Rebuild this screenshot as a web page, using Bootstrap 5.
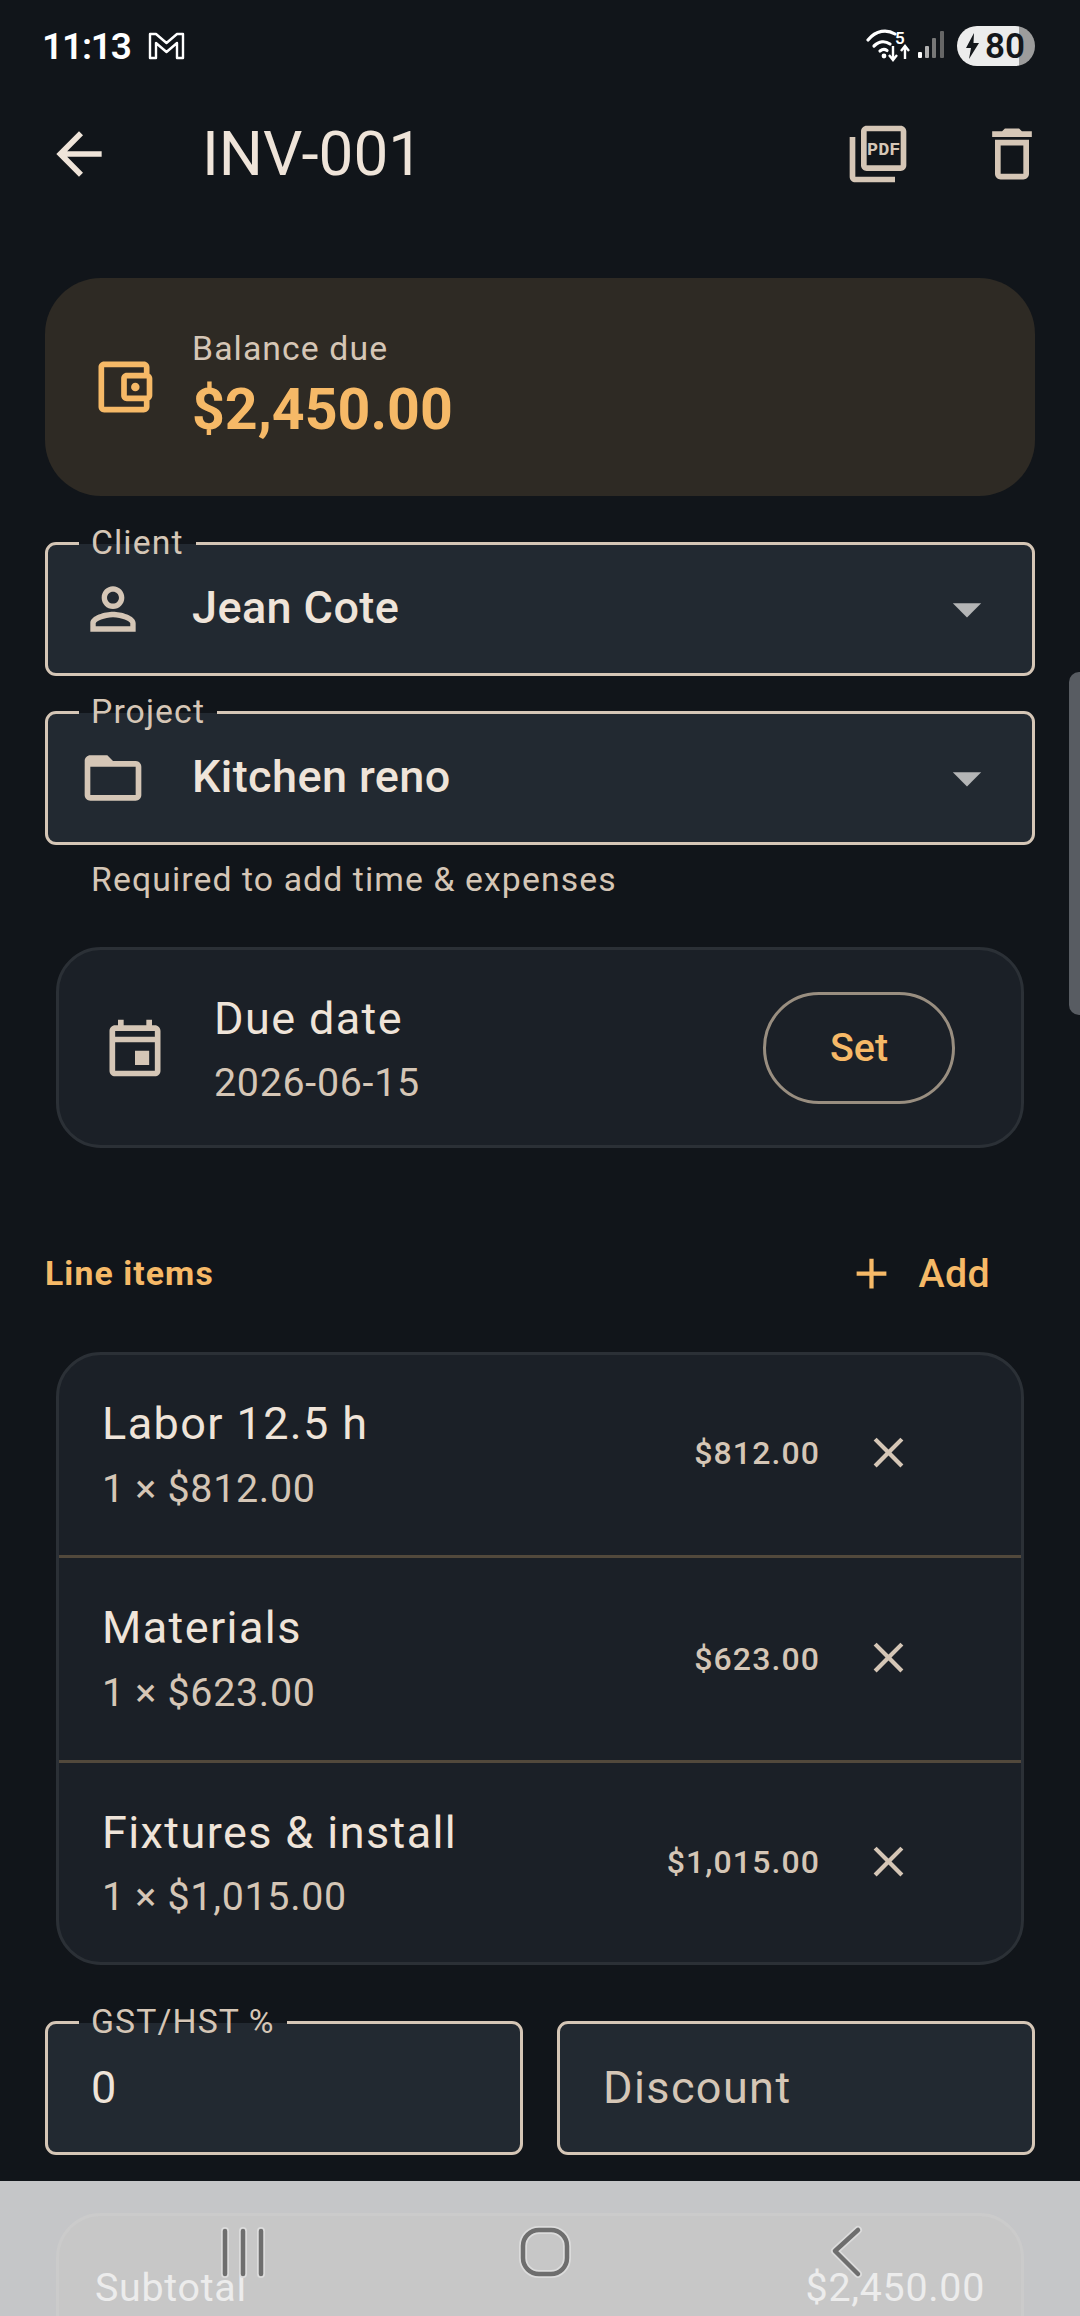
<!DOCTYPE html>
<html lang="en">
<head>
    <meta charset="UTF-8">
    <meta name="viewport" content="width=device-width, initial-scale=1.0">
    <title>INV-001</title>
    <link href="https://cdn.jsdelivr.net/npm/bootstrap@5.3.3/dist/css/bootstrap.min.css" rel="stylesheet">
    <script src="https://cdn.jsdelivr.net/npm/bootstrap@5.3.3/dist/js/bootstrap.bundle.min.js"></script>
    <style>
        body { margin: 0; background: #11151a; font-family: Roboto, "Liberation Sans", sans-serif; color: #efe4d9; }
        .screen { height: 2316px; overflow: hidden; position: relative; background: #11151a; }
        svg { display: block; flex: none; }
        .ico-tan { fill: #d5c6b6; }
        .ico-gold { fill: #f6b967; }

        .statusline { height: 92px; padding: 0 45px 0 42px; }
        .clock { font-size: 37px; font-weight: 600; color: #fff; line-height: 1; margin-right: 17px; letter-spacing: -1.2px; }
        .batt { width: 78px; height: 40px; border-radius: 20px; background: linear-gradient(90deg, #ececec 80%, #9c9c9c 80%); color: #14171b; font-size: 35px; font-weight: 600; padding-left: 9px; gap: 6px; margin-left: 9px; line-height: 1; }

        .appbar { height: 124px; padding: 0 14px 0 45px; }
        .appbar-title { font-size: 62px; font-weight: 400; line-height: 1; margin: 0 0 0 89px; color: #efe4d9; }
        .appbar-acts { gap: 66px; margin-right: 20px; }

        .balance-box { margin: 62px 45px 0; height: 218px; border-radius: 56px; background: #2e2a24; padding-left: 45px; gap: 34px; }
        .balance-label { font-size: 33.75px; letter-spacing: 1.1px; color: #d5c6b6; line-height: 1.2; }
        .balance-amt { font-size: 57.3px; font-weight: 700; color: #f6b967; line-height: 1.2; margin-top: 7px; }

        .outl { position: relative; height: 134px; border: 3px solid #d5c6b6; border-radius: 11px; background: #222931; }
        .outl-full { margin: 46px 45px 0; padding: 0 31px 0 31px; }
        .outl-second { margin-top: 35px; }
        .notch { position: absolute; left: 31px; top: -24px; padding: 0 12px; font-size: 33.75px; line-height: 44px; letter-spacing: 1.1px; color: #d5c6b6; background: linear-gradient(#11151a 52%, #222931 52%); }
        .outl-val { font-size: 45px; font-weight: 500; letter-spacing: .4px; color: #efe4d9; margin: -3px 0 0 45px; }
        .helper { margin: 15px 0 0 91px; font-size: 33.75px; letter-spacing: 1.1px; line-height: 40px; color: #d5c6b6; }

        .panel { background-color: #1b2027; border: 3px solid #2b3036; border-radius: 45px; color: #efe4d9; }
        .due-panel { margin: 47px 56px 0; height: 201px; padding: 0 66px 0 42px; flex-direction: row; }
        .due-txt { margin-left: 45px; padding-top: 3px; }
        .t-main { font-size: 45px; letter-spacing: 1.4px; line-height: 1.2; color: #efe4d9; }
        .t-sub { font-size: 39.4px; letter-spacing: .7px; line-height: 1.2; color: #d5c6b6; margin-top: 13.5px; }
        .set-btn { width: 192px; height: 112px; border-radius: 56px; border: 3px solid #998e80; color: #f6b967; font-size: 39.4px; font-weight: 500; background: transparent; padding: 0; }

        .lines-head { margin: 96px 0 0 45px; height: 60px; padding-right: 90px; }
        .lines-title { font-size: 33.75px; font-weight: 700; letter-spacing: 1.1px; color: #f6b967; }
        .add-btn { color: #f6b967; font-size: 39.4px; font-weight: 500; letter-spacing: .3px; padding: 0; border: 0; gap: 22px; background: transparent; }

        .lines-panel { margin: 48px 56px 0; overflow: hidden; }
        .lines-panel .line-row { height: 205px; background: transparent; border: 0; border-top: 3px solid #52493c; padding: 0 0 0 43px; border-radius: 0; color: #efe4d9; }
        .lines-panel .line-row:first-child { border-top: 0; height: 199.5px; }
        .lines-panel .line-row:last-child { height: 202.5px; }
        .line-row:last-child .line-txt { margin-top: 2px; }
        .line-amt { font-size: 32px; font-weight: 500; letter-spacing: 1.1px; color: #d5c6b6; margin-right: 43px; }
        .line-x { margin-right: 107px; margin-top: -2px; }
        .line-row:first-child .line-amt, .line-row:first-child .line-x { margin-top: -4px; }

        .two-fields { margin: 56px 45px 0; gap: 34px; }
        .two-fields .outl { flex: 1 1 0; padding-left: 43px; font-size: 45px; letter-spacing: 1.4px; }
        .hint { color: #d5c6b6; }

        .sum-panel { position: relative; z-index: 2; margin: 58px 56px 0; height: 300px; background-color: #c7c7c7; border: 3px solid #cbcbcb; padding: 48px 36px 0; flex-direction: row; align-items: flex-start; justify-content: space-between; font-size: 39.4px; letter-spacing: .7px; line-height: 1.2; color: #ececec; border-radius: 45px; }

        .scroll-thumb { position: absolute; left: 1069px; top: 672px; width: 20px; height: 343px; border-radius: 10px; background: #585c62; }
        .nav-back { position: absolute; left: 0; right: 0; bottom: 0; height: 135px; background: #c5c6c8; z-index: 1; }
        .nav-keys { position: absolute; left: 0; top: 2220px; z-index: 3; padding-left: 218px; gap: 251px; }
        .nav-keys svg:last-child { margin-left: 4px; }
        .halo { fill: none; stroke: #dcdcdc; stroke-width: 8; stroke-linecap: round; stroke-linejoin: round; }
        .stroke-k { fill: none; stroke: #6e6e6e; stroke-width: 4.5; stroke-linecap: round; stroke-linejoin: round; }
    </style>
</head>
<body>
<div class="screen">

    <!-- status bar -->
    <div class="statusline d-flex align-items-center">
        <span class="clock">11:13</span>
        <svg width="37" height="28" viewBox="0 0 37 28"><path d="M2 2h6l10.500 9L29 2h6v24h-6V11l-10.500 9L8 11v15H2z" fill="none" stroke="#fff" stroke-width="2.400" stroke-linejoin="round"/></svg>
        <svg class="ms-auto" width="82" height="34" viewBox="0 0 82 34">
            <g fill="none" stroke="#fff" stroke-width="3.200" stroke-linecap="round">
                <path d="M2 11C10 1 21 0 29 5"/>
                <path d="M8 17c5-5 11-5.500 16-2"/>
                <path d="M14 22c2.500-2 5-2 7-.500"/>
            </g>
            <circle cx="18" cy="27" r="2.400" fill="#fff"/>
            <text x="29" y="15" font-family="Roboto" font-size="17" font-weight="600" fill="#fff">5</text>
            <path d="M27 17v13M23 26l4 5 4-5M39 30V18M35 22l4-5 4 5" fill="none" stroke="#fff" stroke-width="2.400"/>
            <rect x="52" y="23" width="4" height="6" rx="1" fill="#fff"/>
            <rect x="59" y="17" width="4" height="12" rx="1" fill="#b0b0b0"/>
            <rect x="66" y="9" width="4" height="20" rx="1" fill="#777"/>
            <rect x="74" y="2" width="4" height="27" rx="1" fill="#666"/>
        </svg>
        <div class="batt d-flex align-items-center">
            <svg width="13" height="26" viewBox="0 0 13 26"><path d="M8 0L0 15h5l-2 11 10-16H7.500z" fill="#14171b"/></svg>
            <span>80</span>
        </div>
    </div>

    <!-- app bar -->
    <div class="appbar d-flex align-items-center">
        <svg width="68" height="68" viewBox="0 0 24 24"><path fill="#efe4d9" d="M20 11H7.830l5.590-5.590L12 4l-8 8 8 8 1.410-1.410L7.830 13H20v-2z"/></svg>
        <h1 class="appbar-title">INV-001</h1>
        <div class="appbar-acts d-flex ms-auto">
            <svg width="68" height="68" viewBox="0 0 24 24"><path class="ico-tan" d="M20 2H8c-1.100 0-2 .9-2 2v12c0 1.100.9 2 2 2h12c1.100 0 2-.9 2-2V4c0-1.100-.9-2-2-2zm0 14H8V4h12v12zM4 6H2v14c0 1.100.9 2 2 2h14v-2H4V6z"/><text x="14" y="12.300" text-anchor="middle" font-family="Liberation Mono" font-weight="700" font-size="6.500" fill="#d5c6b6">PDF</text></svg>
            <svg width="68" height="68" viewBox="0 0 24 24"><path class="ico-tan" d="M6 19c0 1.100.9 2 2 2h8c1.100 0 2-.9 2-2V7H6v12zM8 9h8v10H8V9zm7.500-5l-1-1h-5l-1 1H5v2h14V4h-3.500z"/></svg>
        </div>
    </div>

    <!-- balance -->
    <div class="balance-box d-flex align-items-center">
        <svg width="68" height="68" viewBox="0 0 24 24"><path class="ico-gold" d="M21 7.280V5c0-1.100-.9-2-2-2H5c-1.110 0-2 .9-2 2v14c0 1.100.89 2 2 2h14c1.100 0 2-.9 2-2v-2.280c.59-.35 1-.98 1-1.720V9c0-.74-.41-1.380-1-1.720zM20 9v6h-7V9h7zM5 19V5h14v2h-6c-1.100 0-2 .9-2 2v6c0 1.100.9 2 2 2h6v2H5z"/><circle class="ico-gold" cx="16" cy="12" r="1.500"/></svg>
        <div>
            <div class="balance-label">Balance due</div>
            <div class="balance-amt">$2,450.00</div>
        </div>
    </div>

    <!-- client / project -->
    <div class="outl outl-full d-flex align-items-center">
        <span class="notch">Client</span>
        <svg width="68" height="68" viewBox="0 0 24 24"><path class="ico-tan" d="M12 5.900c1.160 0 2.100.94 2.100 2.100s-.94 2.100-2.100 2.100S9.900 9.160 9.900 8s.94-2.100 2.100-2.100m0 9c2.970 0 6.100 1.460 6.100 2.100v1.100H5.900V17c0-.64 3.130-2.100 6.100-2.100M12 4C9.790 4 8 5.790 8 8s1.790 4 4 4 4-1.790 4-4-1.790-4-4-4zm0 9c-2.670 0-8 1.340-8 4v3h16v-3c0-2.660-5.330-4-8-4z"/></svg>
        <span class="outl-val">Jean Cote</span>
        <svg class="ms-auto" width="68" height="68" viewBox="0 0 24 24"><path fill="#b4b5b6" d="M7 10l5 5 5-5z"/></svg>
    </div>
    <div class="outl outl-full outl-second d-flex align-items-center">
        <span class="notch">Project</span>
        <svg width="68" height="68" viewBox="0 0 24 24"><path class="ico-tan" d="M20 6h-8l-2-2H4c-1.100 0-1.990.9-1.990 2L2 18c0 1.100.9 2 2 2h16c1.100 0 2-.9 2-2V8c0-1.100-.9-2-2-2zm0 12H4V8h16v10z"/></svg>
        <span class="outl-val">Kitchen reno</span>
        <svg class="ms-auto" width="68" height="68" viewBox="0 0 24 24"><path fill="#b4b5b6" d="M7 10l5 5 5-5z"/></svg>
    </div>
    <div class="helper">Required to add time &amp; expenses</div>

    <!-- due date -->
    <div class="card panel due-panel align-items-center">
        <svg width="68" height="68" viewBox="0 0 24 24"><path class="ico-tan" d="M19 4h-1V2h-2v2H8V2H6v2H5c-1.100 0-2 .9-2 2v14c0 1.100.9 2 2 2h14c1.100 0 2-.9 2-2V6c0-1.100-.9-2-2-2zm0 2v2H5V6h14zM5 20V10h14v10H5zm7-7h5v5h-5z"/></svg>
        <div class="due-txt">
            <div class="t-main">Due date</div>
            <div class="t-sub">2026-06-15</div>
        </div>
        <button type="button" class="btn set-btn ms-auto">Set</button>
    </div>

    <!-- line items -->
    <div class="lines-head d-flex align-items-center justify-content-between">
        <span class="lines-title">Line items</span>
        <button type="button" class="btn add-btn d-flex align-items-center">
            <svg width="51" height="51" viewBox="0 0 24 24"><path class="ico-gold" d="M19 13h-6v6h-2v-6H5v-2h6V5h2v6h6v2z"/></svg>
            Add
        </button>
    </div>

    <div class="card panel lines-panel">
        <ul class="list-group list-group-flush">
            <li class="list-group-item line-row d-flex align-items-center">
                <div class="line-txt flex-grow-1">
                    <div class="t-main">Labor 12.5 h</div>
                    <div class="t-sub">1 × $812.00</div>
                </div>
                <span class="line-amt">$812.00</span>
                <svg class="line-x" width="51" height="51" viewBox="0 0 24 24"><path class="ico-tan" d="M19 6.410L17.590 5 12 10.590 6.410 5 5 6.410 10.590 12 5 17.590 6.410 19 12 13.410 17.590 19 19 17.590 13.410 12z"/></svg>
            </li>
            <li class="list-group-item line-row d-flex align-items-center">
                <div class="line-txt flex-grow-1">
                    <div class="t-main">Materials</div>
                    <div class="t-sub">1 × $623.00</div>
                </div>
                <span class="line-amt">$623.00</span>
                <svg class="line-x" width="51" height="51" viewBox="0 0 24 24"><path class="ico-tan" d="M19 6.410L17.590 5 12 10.590 6.410 5 5 6.410 10.590 12 5 17.590 6.410 19 12 13.410 17.590 19 19 17.590 13.410 12z"/></svg>
            </li>
            <li class="list-group-item line-row d-flex align-items-center">
                <div class="line-txt flex-grow-1">
                    <div class="t-main">Fixtures &amp; install</div>
                    <div class="t-sub">1 × $1,015.00</div>
                </div>
                <span class="line-amt">$1,015.00</span>
                <svg class="line-x" width="51" height="51" viewBox="0 0 24 24"><path class="ico-tan" d="M19 6.410L17.590 5 12 10.590 6.410 5 5 6.410 10.590 12 5 17.590 6.410 19 12 13.410 17.590 19 19 17.590 13.410 12z"/></svg>
            </li>
        </ul>
    </div>

    <!-- tax + discount -->
    <div class="two-fields d-flex">
        <div class="outl d-flex align-items-center">
            <span class="notch">GST/HST %</span>
            <span>0</span>
        </div>
        <div class="outl d-flex align-items-center">
            <span class="hint">Discount</span>
        </div>
    </div>

    <!-- totals, mostly behind the nav bar -->
    <div class="card panel sum-panel">
        <span>Subtotal</span>
        <span>$2,450.00</span>
    </div>

    <div class="scroll-thumb"></div>
    <div class="nav-back"></div>
    <div class="nav-keys d-flex">
        <svg width="48" height="60" viewBox="0 0 48 60">
            <path class="halo" d="M7 11v43M25 11v43M43 11v43"/>
            <path class="stroke-k" d="M7 11v43M25 11v43M43 11v43"/>
        </svg>
        <svg width="56" height="60" viewBox="0 0 56 60">
            <rect class="halo" x="6" y="10" width="44" height="44" rx="16"/>
            <rect class="stroke-k" x="6" y="10" width="44" height="44" rx="16"/>
        </svg>
        <svg width="40" height="60" viewBox="0 0 40 60">
            <path class="halo" d="M30 10L7 31l23 23"/>
            <path class="stroke-k" d="M30 10L7 31l23 23"/>
        </svg>
    </div>
</div>
</body>
</html>
